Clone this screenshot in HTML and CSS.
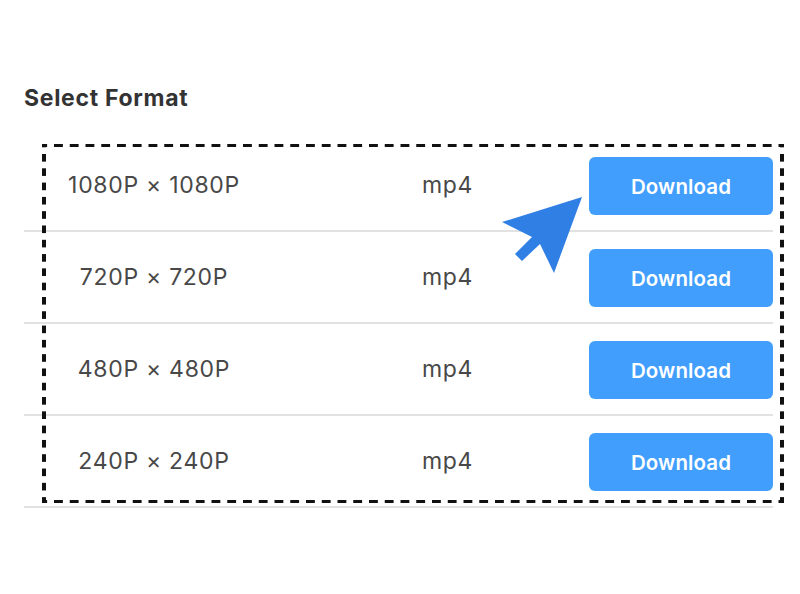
FILE: index.html
```html
<!DOCTYPE html>
<html lang="en">
<head>
<meta charset="utf-8">
<title>Select Format</title>
<link rel="stylesheet" href="styles.css">
</head>
<body>
<main class="page">
  <h2 class="title">Select Format</h2>
  <div class="table">
    <div class="row">
      <span class="res">1080P × 1080P</span>
      <span class="fmt">mp4</span>
      <button class="btn">Download</button>
    </div>
    <div class="row">
      <span class="res">720P × 720P</span>
      <span class="fmt">mp4</span>
      <button class="btn">Download</button>
    </div>
    <div class="row">
      <span class="res">480P × 480P</span>
      <span class="fmt">mp4</span>
      <button class="btn">Download</button>
    </div>
    <div class="row">
      <span class="res">240P × 240P</span>
      <span class="fmt">mp4</span>
      <button class="btn">Download</button>
    </div>
    <div class="frame"></div>
    <svg class="cursor" width="86" height="82" viewBox="0 0 86 82" aria-hidden="true">
      <polygon points="82,3 2,28 32,43 15,60 22,67 40,50 54,79" fill="#2f7fe5"/>
    </svg>
  </div>
</main>
</body>
</html>
```

FILE: styles.css
```css
html, body {
  margin: 0;
  padding: 0;
  background: #ffffff;
}

.page {
  padding: 86px 0 0 24px;
  font-family: Inter, "Liberation Sans", sans-serif;
}

.title {
  margin: 0;
  font-size: 23px;
  line-height: 24px;
  letter-spacing: 0.7px;
  font-weight: 700;
  color: #333333;
}

.table {
  position: relative;
  margin-top: 30px;
  width: 749px;
}

.row {
  display: grid;
  grid-template-columns: 260px 305px 184px;
  align-items: center;
  height: 90px;
  border-bottom: 2px solid #e2e2e2;
}

.res {
  text-align: center;
  font-size: 23px;
  letter-spacing: 0.7px;
  color: #484848;
}

.fmt {
  text-align: center;
  padding-left: 22px;
  font-size: 23px;
  letter-spacing: 0.7px;
  color: #484848;
}

.btn {
  height: 58px;
  margin-top: 2px;
  border: none;
  border-radius: 6px;
  background: #419efc;
  color: #ffffff;
  font-family: Inter, "Liberation Sans", sans-serif;
  font-size: 20.5px;
  font-weight: 600;
  letter-spacing: 0.1px;
  padding: 0;
}

.frame {
  position: absolute;
  left: 18px;
  top: 4px;
  width: 742px;
  height: 359px;
  pointer-events: none;
  background-image:
    linear-gradient(90deg, #111 9px, transparent 9px),
    linear-gradient(90deg, #111 9px, transparent 9px),
    linear-gradient(180deg, #111 8px, transparent 8px),
    linear-gradient(180deg, #111 8px, transparent 8px);
  background-size:
    15.76px 3px,
    15.76px 3px,
    4px 14.3px,
    4px 14.3px;
  background-position:
    12px 0,
    12px 100%,
    0 10px,
    100% 10px;
  background-repeat: repeat-x, repeat-x, repeat-y, repeat-y;
}

.cursor {
  position: absolute;
  left: 476px;
  top: 54px;
}
```
